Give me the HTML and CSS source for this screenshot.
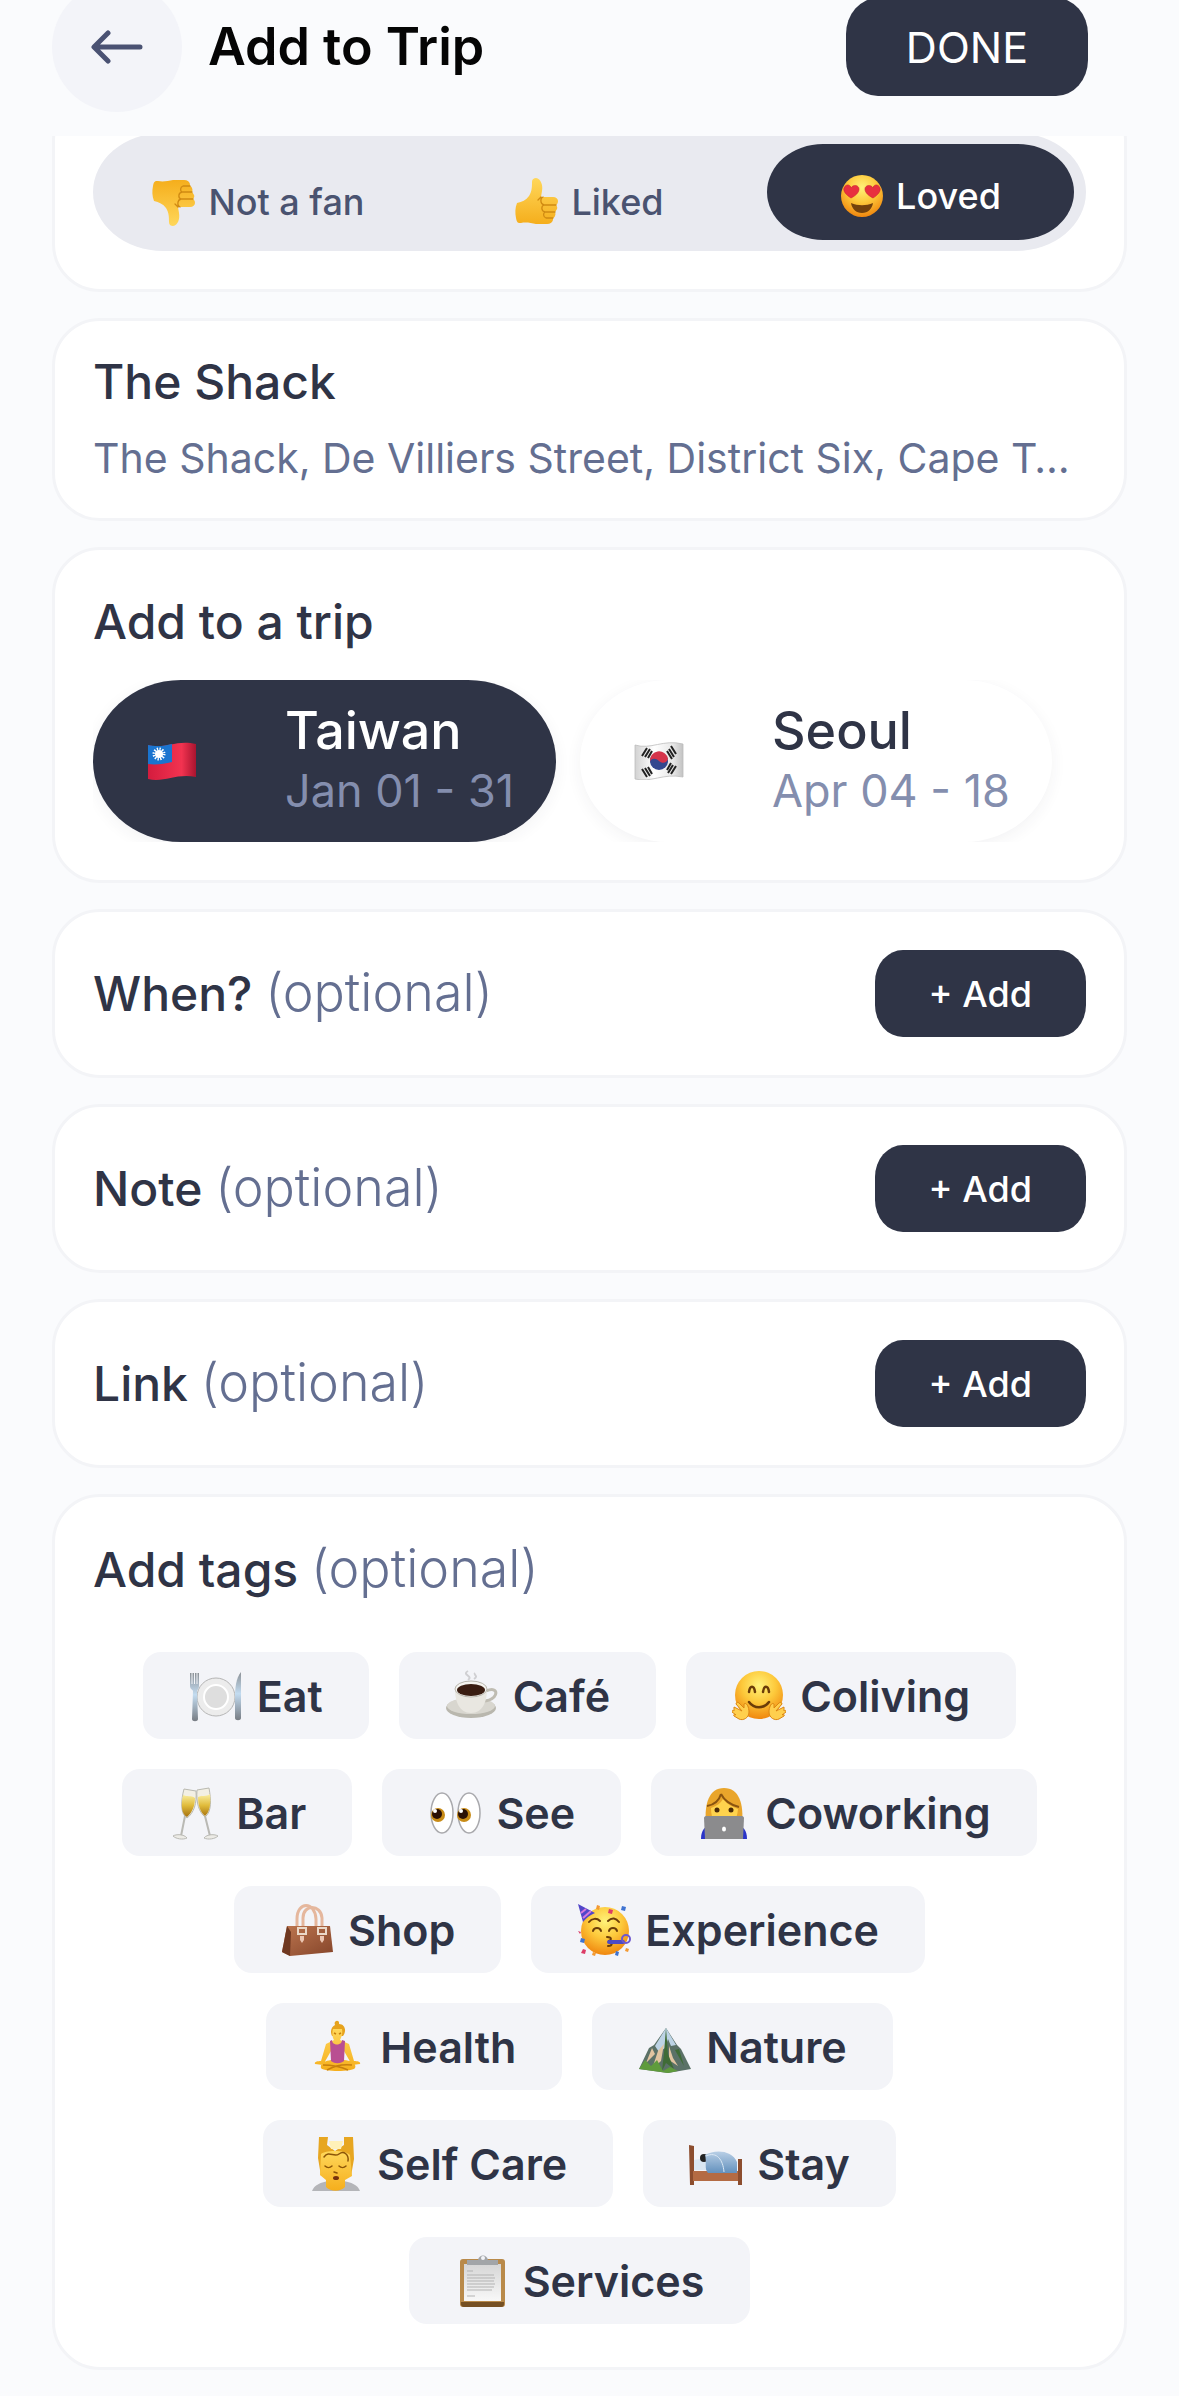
FILE: index.html
```
<!DOCTYPE html>
<html lang="en">
<head>
    <meta charset="UTF-8">
    <meta name="viewport" content="width=device-width, initial-scale=1.0">
    <title>Add to Trip</title>
    <link rel="stylesheet" href="styles.css">
</head>
<body>

    <!-- Shared gradients for the emoji icons -->
    <svg class="defs" width="0" height="0" aria-hidden="true">
        <defs>
            <radialGradient id="face" cx="50%" cy="30%" r="70%">
                <stop offset="0" stop-color="#fff27a"/>
                <stop offset="0.5" stop-color="#fdc93b"/>
                <stop offset="1" stop-color="#f0870f"/>
            </radialGradient>
            <linearGradient id="skin" x1="0" y1="0" x2="0" y2="1">
                <stop offset="0" stop-color="#ffd75a"/>
                <stop offset="1" stop-color="#f5ae1c"/>
            </linearGradient>
            <linearGradient id="metal" x1="0" y1="0" x2="0" y2="1">
                <stop offset="0" stop-color="#8c9196"/>
                <stop offset="0.45" stop-color="#c3dcf1"/>
                <stop offset="1" stop-color="#777c83"/>
            </linearGradient>
            <linearGradient id="leather" x1="0" y1="0" x2="1" y2="1">
                <stop offset="0" stop-color="#bd7650"/>
                <stop offset="1" stop-color="#85452a"/>
            </linearGradient>
            <linearGradient id="wine" x1="0" y1="0" x2="0" y2="1">
                <stop offset="0" stop-color="#fbf0a4"/>
                <stop offset="0.5" stop-color="#e0bb3b"/>
                <stop offset="1" stop-color="#a5700f"/>
            </linearGradient>
            <linearGradient id="paper" x1="0" y1="0" x2="0" y2="1">
                <stop offset="0" stop-color="#d6d6d6"/>
                <stop offset="1" stop-color="#f8f8f8"/>
            </linearGradient>
            <linearGradient id="blanket" x1="0" y1="0" x2="0" y2="1">
                <stop offset="0" stop-color="#b9cfe6"/>
                <stop offset="1" stop-color="#6391bd"/>
            </linearGradient>
            <linearGradient id="flag-red" x1="0" y1="0" x2="1" y2="0">
                <stop offset="0" stop-color="#d41c3e"/>
                <stop offset="0.7" stop-color="#f23350"/>
                <stop offset="1" stop-color="#a8142f"/>
            </linearGradient>
            <linearGradient id="flag-white" x1="0" y1="0" x2="1" y2="0">
                <stop offset="0" stop-color="#d2d2d2"/>
                <stop offset="0.4" stop-color="#ffffff"/>
                <stop offset="0.8" stop-color="#e6e6e6"/>
                <stop offset="1" stop-color="#c2c2c2"/>
            </linearGradient>
            <g id="thumb">
                <path fill="url(#skin)" d="M2 25c5-1 9-3 12-7 3-5 3-9 3-14 0-3 2-4 4-4 5 1 7 7 6 13l-1 6h12c3 0 5 2 5 4 0 3-2 4-2 4s2 2 1 4-2 3-2 3 1 2 0 4-2 2-2 2 1 6-6 6H21c-5-1-10-2-15-1-3 0-4 0-5-5-1-5-1-10 1-15z"/>
                <path fill="none" stroke="#d08a12" stroke-width="1.3" stroke-linecap="round" d="M28 19c-3 1-3 7 1 8h12M29 27c-3 1-3 6 1 7h10M30 34c-2 1-2 5 1 6h7M26 19l-3 3"/>
            </g>
        </defs>
    </svg>

    <header class="topbar">
        <button class="back-btn" type="button" aria-label="Back">
            <svg viewBox="0 0 52 36" width="52" height="36" fill="none" stroke="#4a5273" stroke-width="5" stroke-linecap="round" stroke-linejoin="round">
                <path d="M49 18H4M17 4L3 18l14 14"/>
            </svg>
        </button>
        <h1>Add to Trip</h1>
        <button class="done-btn" type="button">DONE</button>
    </header>

    <main>
        <section class="card rating-card">
            <div class="rating" role="radiogroup" aria-label="Rating">
                <label class="rate">
                    <input type="radio" name="rating" value="bad">
                    <svg class="rate-icon" viewBox="0 0 44 48" aria-hidden="true"><use href="#thumb" transform="matrix(1 0 0 -1 0 48)"/></svg>
                    <span>Not a fan</span>
                </label>
                <label class="rate">
                    <input type="radio" name="rating" value="liked">
                    <svg class="rate-icon" viewBox="0 0 44 48" aria-hidden="true"><use href="#thumb"/></svg>
                    <span>Liked</span>
                </label>
                <label class="rate selected">
                    <input type="radio" name="rating" value="loved" checked>
                    <svg class="rate-icon" viewBox="0 0 44 48" aria-hidden="true">
                        <circle cx="22" cy="24" r="21" fill="url(#face)"/>
                        <path fill="#e8303f" stroke="#c9202d" stroke-width="0.6" d="M11 26c-5-3-8-7-7-10 2-5 7-3 7 0 2-4 8-3 8 1 0 4-4 7-8 9zM33 26c5-3 8-7 7-10-2-5-7-3-7 0-2-4-8-3-8 1 0 4 4 7 8 9z"/>
                        <path fill="#74420c" d="M11 31c7 3 15 3 22 0-1 6-5 10-11 10s-10-4-11-10z"/>
                    </svg>
                    <span>Loved</span>
                </label>
            </div>
        </section>

        <section class="card place-card">
            <h2>The Shack</h2>
            <p class="address">The Shack, De Villiers Street, District Six, Cape Town, South Africa</p>
        </section>

        <section class="card">
            <h2>Add to a trip</h2>
            <div class="trips">
                <button class="trip active" type="button">
                    <svg class="flag" viewBox="0 0 50 38" aria-hidden="true">
                        <path fill="url(#flag-red)" d="M1 3c16 5 28-6 48-1v33c-20-4-32 6-48 2z"/>
                        <path fill="#1a74cf" d="M1 3c9 2 16 1 24-1v18c-8 2-16 3-24 2z"/>
                        <circle cx="12" cy="12" r="5" fill="none" stroke="#fff" stroke-width="3" stroke-dasharray="1.3 1.3"/>
                        <circle cx="12" cy="12" r="4" fill="#fff"/>
                    </svg>
                    <span class="trip-text">
                        <span class="trip-name">Taiwan</span>
                        <span class="trip-dates">Jan 01 - 31</span>
                    </span>
                </button>
                <button class="trip" type="button">
                    <svg class="flag" viewBox="0 0 50 38" aria-hidden="true">
                        <path fill="url(#flag-white)" stroke="#bdbdbd" stroke-width="0.8" d="M1 3c16 5 28-6 48-1v33c-20-4-32 6-48 2z"/>
                        <circle cx="25" cy="19" r="9" fill="#34478f"/>
                        <path fill="#d5334a" d="M16 20a9 9 0 0 1 18-3c-1 4-6 5-9 2s-8-3-9 1z"/>
                        <path fill="none" stroke="#222" stroke-width="2" d="M8 14l5-8M11 15l5-8M14 16l4-7M8 27l5 8M11 26l5 8M14 25l4 7M35 7l5 8M37 4l5 8M33 9l5 8M34 31l5-8M37 32l5-8M33 28l4-7"/>
                    </svg>
                    <span class="trip-text">
                        <span class="trip-name">Seoul</span>
                        <span class="trip-dates">Apr 04 - 18</span>
                    </span>
                </button>
            </div>
        </section>

        <section class="card row-card">
            <h2>When? <span class="optional">(optional)</span></h2>
            <button class="add-btn" type="button">+ Add</button>
        </section>

        <section class="card row-card">
            <h2>Note <span class="optional">(optional)</span></h2>
            <button class="add-btn" type="button">+ Add</button>
        </section>

        <section class="card row-card">
            <h2>Link <span class="optional">(optional)</span></h2>
            <button class="add-btn" type="button">+ Add</button>
        </section>

        <section class="card tags-card">
            <h2>Add tags <span class="optional">(optional)</span></h2>
            <div class="tags">
                <button class="tag" type="button">
                    <svg viewBox="0 0 54 54" aria-hidden="true">
                        <circle cx="27" cy="28" r="19" fill="#ececec" stroke="#b5b5b5"/>
                        <circle cx="27" cy="28" r="12" fill="#dedede" stroke="#fff" stroke-width="2"/>
                        <path fill="url(#metal)" d="M1 4h1.500v11h1V4H5v11h1V4h1.500v11h1V4H10v13c0 3-2 4-2 5l1 28c0 3-6 3-6 0l1-28c0-1-3-2-3-5z"/>
                        <path fill="url(#metal)" d="M52 3v46c0 3-6 3-6 0V29c0-10 1-20 6-26z"/>
                    </svg>
                    Eat
                </button>
                <button class="tag" type="button">
                    <svg viewBox="0 0 54 54" aria-hidden="true">
                        <ellipse cx="26" cy="39" rx="25" ry="10" fill="#b9b7ae"/>
                        <ellipse cx="26" cy="37" rx="24" ry="8" fill="#d8d6cf"/>
                        <path fill="none" stroke="#bfbcb2" stroke-width="3" d="M41 22c9-4 12 1 8 6-3 3-7 4-11 4"/>
                        <path fill="#e9e7e1" d="M10 20h32c0 12-4 24-16 24S10 32 10 20z"/>
                        <ellipse cx="26" cy="20" rx="16" ry="8" fill="#f5f4f0" stroke="#b8b5ad"/>
                        <ellipse cx="26" cy="21" rx="14" ry="6" fill="#3a1d12"/>
                        <path fill="none" stroke="#cfcfd2" stroke-width="2" d="M23 11c6-4-7-5 0-9M29 10c5-3-1-4 1-6"/>
                    </svg>
                    Café
                </button>
                <button class="tag" type="button">
                    <svg viewBox="0 0 54 54" aria-hidden="true">
                        <circle cx="27" cy="26" r="24" fill="url(#face)"/>
                        <path fill="none" stroke="#6b3c08" stroke-width="2.500" stroke-linecap="round" d="M17 23c1-7 5-7 6 0M31 23c1-7 5-7 6 0M17 33c5 7 15 7 20 0"/>
                        <path fill="#ffcf4d" stroke="#dc8612" stroke-width="1" d="M2 38l8 4-6-7c0-2 2-2 3-1l5 5v-4c2-2 5 2 5 8s-6 9-10 7l-5-3c-1-2 1-2 2-1l-4-3c0-2 1-2 2-1zM52 38l-8 4 6-7c0-2-2-2-3-1l-5 5v-4c-2-2-5 2-5 8s6 9 10 7l5-3c1-2-1-2-2-1l4-3c0-2-1-2-2-1z"/>
                    </svg>
                    Coliving
                </button>
                <button class="tag" type="button">
                    <svg viewBox="0 0 54 54" aria-hidden="true">
                        <path fill="none" stroke="#b9b9b4" stroke-width="2" d="M17 30l-4 20M37 30l5 20"/>
                        <path fill="#ecebe6" stroke="#b9b9b4" stroke-width="1" d="M5 50c3-2 11-2 14 2-4 2-11 1-14-2zM50 50c-3-2-11-2-14 2 4 2 11 1 14-2z"/>
                        <path fill="#f3f0e4" stroke="#b9b9b0" stroke-width="1" d="M16 3l12 2c1 12-2 22-9 27-7-4-6-18-3-29zM41 2L29 4c-1 13 2 22 8 27 7-5 6-18 4-29z"/>
                        <path fill="url(#wine)" d="M15 9c4 2 8 0 12 3 0 8-3 15-8 19-6-3-6-13-4-22zM30 11c4-2 8 0 12-3 1 9 0 18-5 22-5-4-7-11-7-19z"/>
                    </svg>
                    Bar
                </button>
                <button class="tag" type="button">
                    <svg viewBox="0 0 54 54" aria-hidden="true">
                        <ellipse cx="14" cy="27" rx="11" ry="20" fill="#fff" stroke="#a9a9ad" stroke-width="1.500"/>
                        <ellipse cx="41" cy="27" rx="11" ry="20" fill="#fff" stroke="#a9a9ad" stroke-width="1.500"/>
                        <circle cx="10" cy="29" r="7" fill="#c88b16"/>
                        <circle cx="36" cy="29" r="7" fill="#c88b16"/>
                        <circle cx="9" cy="28" r="5" fill="#2a1006"/>
                        <circle cx="35" cy="28" r="5" fill="#2a1006"/>
                        <circle cx="7" cy="25" r="2" fill="#fff"/>
                        <circle cx="33" cy="25" r="2" fill="#fff"/>
                    </svg>
                    See
                </button>
                <button class="tag" type="button">
                    <svg viewBox="0 0 54 54" aria-hidden="true">
                        <path fill="#e9a52b" d="M9 38C7 18 12 2 27 2s20 16 18 36z"/>
                        <path fill="#2a34c8" d="M4 53c0-9 4-13 10-14h26c6 1 10 5 10 14z"/>
                        <path fill="#ffd34d" d="M14 22c6-2 10-5 12-9 4 5 9 8 15 10-1 12-6 17-14 17s-13-6-13-18z"/>
                        <path fill="none" stroke="#8a5410" stroke-width="2" d="M10 20c6-1 12-5 14-12M24 8c3 6 10 11 18 13"/>
                        <circle cx="20" cy="24" r="2.500" fill="#4a2a08"/>
                        <circle cx="34" cy="24" r="2.500" fill="#4a2a08"/>
                        <path fill="#8b8b8d" d="M7 32c0-1 1-2 2-2h36c1 0 2 1 2 2l-1 21H8z"/>
                        <ellipse cx="27" cy="43" rx="2" ry="2.500" fill="#fff"/>
                    </svg>
                    Coworking
                </button>
                <button class="tag" type="button">
                    <svg viewBox="0 0 54 54" aria-hidden="true">
                        <path fill="none" stroke="#e5b79d" stroke-width="3" d="M17 32V16c0-18 18-18 19 0v14M23 26V15c0-14 18-14 19 0v10"/>
                        <path fill="url(#leather)" d="M7 23l43 0 3 26-43 4-8-4z"/>
                        <path fill="#6e3821" d="M7 23l4 6-1 24-8-4z"/>
                        <path fill="none" stroke="#ead9c9" stroke-width="2" d="M18 25h8v6h-8zM38 25h8v6h-8z"/>
                        <path fill="#ecc6b2" d="M20 33h4v4l-2 3-2-3zM40 33h4v4l-2 3-2-3z"/>
                    </svg>
                    Shop
                </button>
                <button class="tag" type="button">
                    <svg viewBox="0 0 54 54" aria-hidden="true">
                        <circle cx="28" cy="28" r="24" fill="url(#face)"/>
                        <path fill="#5146c9" d="M1 1l17 9c-5 2-9 5-12 9z"/>
                        <path stroke="#d678dc" stroke-width="2" d="M4 10l5-4M6 15l8-7"/>
                        <path fill="none" stroke="#6b3c08" stroke-width="2" stroke-linecap="round" d="M12 19c3-4 8-4 11-1M31 18c4-4 8-3 11 1M16 28c1-4 7-4 8 0M32 28c1-4 7-4 8 0M30 34c6 0 4 4 1 4 5 0 5 5 0 5"/>
                        <path fill="none" stroke="#4d4bc4" stroke-width="4" stroke-linecap="round" d="M32 39h14"/>
                        <circle cx="49" cy="36" r="4" fill="none" stroke="#6f58cf" stroke-width="2"/>
                        <path fill="#3f73d1" d="M45 3l4 1-1 4-4-1zM4 35l4 1-1 4-4-1zM39 48l3 1-1 4-3-1z"/>
                        <path fill="#dc3c66" d="M32 6l4 1-1 4-4-1zM6 46l3 1-1 4-4-1zM1 28l3 1-1 2z"/>
                        <path fill="#f39a33" d="M20 2l3 1-1 4-3-1zM49 45l3 1-1 3-3-1zM16 49l3 1-1 3-3-1z"/>
                    </svg>
                    Experience
                </button>
                <button class="tag" type="button">
                    <svg viewBox="0 0 54 54" aria-hidden="true">
                        <path fill="#e6a21d" d="M23 5c-2-5 5-6 4-1 6 0 8 7 4 12H20c-2-4-1-9 3-11z"/>
                        <path fill="url(#skin)" d="M21 9h9c1 6-1 9-2 11l9 4 5 17c4 0 7 1 6 3l-8 1-8-14v9c7 1 13 3 11 8-2 4-32 4-34 0-1-5 4-7 10-8v-9l-8 14-8-1c-1-2 2-3 6-3l5-17 8-4c-2-3-2-8-1-11z"/>
                        <path fill="#b94f92" d="M18 21l2-1c0 6 10 6 10 0l3 1-1 20c-4 3-9 3-13 0z"/>
                        <path fill="none" stroke="#c77f0d" stroke-width="1.500" d="M11 45c8 0 16 1 25 5M40 45c-8-1-18 1-25 5M22 13l2 1M27 14l2-1"/>
                    </svg>
                    Health
                </button>
                <button class="tag" type="button">
                    <svg viewBox="0 0 54 54" aria-hidden="true">
                        <path fill="#5b7167" d="M1 49l10-21 5-3L28 8l11 17 4 4 10 20-23 4z"/>
                        <path fill="#bdd3e5" d="M28 8l10 17-5 1-3-7-3 9-6 4-4-6z"/>
                        <path fill="#e1c4a0" d="M20 31l6-7-3 17-9 8zM31 26l4 12 5 8-9-6zM14 28l-6 15 9-9z"/>
                        <path fill="#3f6b36" d="M28 8l2 26 6 15-8-6-4 8 2-18zM41 29l5 17-9-16z"/>
                        <path fill="#5f9b3c" d="M1 49l6-9 6 6 6-6 6 11 7-4 8 4-10 2z"/>
                    </svg>
                    Nature
                </button>
                <button class="tag" type="button">
                    <svg viewBox="0 0 54 54" aria-hidden="true">
                        <path fill="#b4b5b9" d="M3 54c2-6 9-9 17-10h14c8 1 15 4 17 10z"/>
                        <path fill="#e7a621" d="M10 0h9l-1 8 8 6 9-6V0h9l1 22-3 17H12L9 21z"/>
                        <path fill="url(#skin)" d="M12 17c5-4 24-4 29 1l2 21-7 4v7c-5 5-14 5-19 0v-7l-6-5z"/>
                        <path fill="#fff1b8" d="M20 4h14l-2 8H22z"/>
                        <path fill="none" stroke="#8c5508" stroke-width="1.500" stroke-linecap="round" d="M15 20c5-7 10 1 15-3s10 1 9 7M16 29c2 2 5 2 7 0M30 29c2 2 5 2 7 0M25 35l3 1"/>
                        <ellipse cx="27" cy="41" rx="3" ry="2" fill="#78320d"/>
                    </svg>
                    Self Care
                </button>
                <button class="tag" type="button">
                    <svg viewBox="0 0 54 54" aria-hidden="true">
                        <path fill="#8c4d2e" d="M0 8l5 1v39H1zM49 22h4v26h-4z"/>
                        <path fill="#b46b43" d="M4 34h45v10H4z"/>
                        <path fill="#d9e6f2" d="M5 23l13-2v12H5z"/>
                        <ellipse cx="15" cy="21" rx="4" ry="4" fill="#222"/>
                        <path fill="url(#blanket)" d="M16 18c10-6 27-5 32 7v11H19c-4-4-1-11-3-18z"/>
                        <path fill="none" stroke="#dce9f5" stroke-width="1" d="M17 19c11-5 17 4 18 16"/>
                    </svg>
                    Stay
                </button>
                <button class="tag" type="button">
                    <svg viewBox="0 0 54 54" aria-hidden="true">
                        <rect x="5" y="5" width="45" height="48" rx="3" fill="#b98a4a"/>
                        <path fill="#765023" d="M6 48h43v2c0 2-1 3-3 3H9c-2 0-3-1-3-3z"/>
                        <path fill="url(#paper)" d="M9 10h37v37H9z"/>
                        <path stroke="#b3b3b3" stroke-width="1" d="M12 17h6M12 21h27M12 24h28M12 27h27M12 30h28M12 33h27M12 36h25M12 42h8"/>
                        <path fill="#a2a5a8" d="M12 6h11c1-6 9-6 10 0h10v5H12z"/>
                        <circle cx="28" cy="4" r="2" fill="#f3f4f8"/>
                    </svg>
                    Services
                </button>
            </div>
        </section>
    </main>

</body>
</html>
```
FILE: styles.css
```
* {
    box-sizing: border-box;
}

body {
    margin: 0;
    font-family: Inter, "Open Sans", sans-serif;
    background-color: #fafbfd;
    color: #2f3446;
    overflow-x: hidden;
}

h1, h2, p {
    margin: 0;
}

button {
    border: none;
    padding: 0;
    font-family: inherit;
    cursor: pointer;
}

.defs {
    position: absolute;
}

/* Top bar */
.topbar {
    position: relative;
    z-index: 2;
    display: flex;
    align-items: center;
    gap: 26px;
    margin-top: -18px;
    padding: 0 91px 24px 52px;
    background-color: #fafbfd;
}

.back-btn {
    display: flex;
    align-items: center;
    justify-content: center;
    width: 130px;
    height: 130px;
    border-radius: 50%;
    background-color: #f3f4f9;
}

h1 {
    flex: 1;
    font-size: 52px;
    font-weight: 600;
    line-height: 72px;
    color: #050505;
}

.done-btn {
    padding: 0 60px;
    height: 98px;
    border-radius: 32px / 36px;
    background-color: #2f3446;
    color: #fff;
    font-size: 43px;
}

/* Cards */
main {
    display: flex;
    flex-direction: column;
    gap: 26px;
    padding: 0 52px 26px;
}

.card {
    padding: 38px;
    border: 3px solid #f3f4f7;
    border-radius: 48px;
    background-color: #fff;
}

h2 {
    font-size: 48px;
    font-weight: 500;
    line-height: 68px;
}

.optional {
    font-size: 52px;
    font-weight: 300;
    color: #646f91;
}

/* Rating, scrolled partly under the top bar */
.rating-card {
    margin-top: -44px;
}

.rating {
    display: flex;
    height: 118px;
    border-radius: 70px / 59px;
    background-color: #e9eaf0;
}

.rate {
    flex: 1;
    display: flex;
    align-items: center;
    justify-content: center;
    gap: 12px;
    margin: 11px 12px;
    padding-top: 20px;
    color: #4a5370;
    font-size: 36px;
    font-weight: 500;
    cursor: pointer;
}

.rate input {
    position: absolute;
    opacity: 0;
}

.rate-icon {
    width: 44px;
    height: 48px;
}

.rate.selected {
    padding-top: 8px;
    border-radius: 56px / 48px;
    background-color: #2f3446;
    color: #fff;
}

/* Place */
.place-card {
    padding-top: 31px;
    padding-bottom: 30px;
}

.place-card h2 {
    line-height: 60px;
}

.address {
    margin-top: 16px;
    font-size: 41px;
    line-height: 60px;
    color: #646f91;
    white-space: nowrap;
    overflow: hidden;
    text-overflow: ellipsis;
}

/* Trips */
.trips {
    display: flex;
    gap: 24px;
    margin-top: 24px;
    overflow: hidden;
}

.trip {
    display: flex;
    align-items: center;
    gap: 88px;
    height: 162px;
    padding: 0 42px 0 54px;
    border-radius: 88px / 81px;
    background-color: #fff;
    color: #2f3446;
    text-align: left;
    box-shadow: 0 4px 16px rgba(47, 52, 70, 0.06);
}

.trip.active {
    background-color: #2f3446;
    color: #fff;
}

.flag {
    width: 50px;
    height: 38px;
}

.trip-text {
    display: flex;
    flex-direction: column;
    line-height: 60px;
    white-space: nowrap;
}

.trip-name {
    font-size: 52px;
    font-weight: 500;
}

.trip-dates {
    font-size: 45px;
    color: #848eae;
}

/* Optional fields */
.row-card {
    display: flex;
    align-items: center;
    justify-content: space-between;
}

.add-btn {
    height: 87px;
    padding: 0 54px;
    border-radius: 28px / 32px;
    background-color: #2f3446;
    color: #fff;
    font-size: 36px;
    font-weight: 500;
}

/* Tags */
.tags-card {
    padding-bottom: 43px;
}

.tags {
    display: flex;
    flex-wrap: wrap;
    justify-content: center;
    gap: 30px;
    margin-top: 48px;
    padding-right: 20px;
}

.tag {
    display: flex;
    align-items: center;
    gap: 14px;
    height: 87px;
    padding: 0 46px;
    border-radius: 18px;
    background-color: #f3f4f8;
    color: #2f3446;
    font-size: 43px;
    font-weight: 600;
}

.tag svg {
    width: 54px;
    height: 54px;
}
```
